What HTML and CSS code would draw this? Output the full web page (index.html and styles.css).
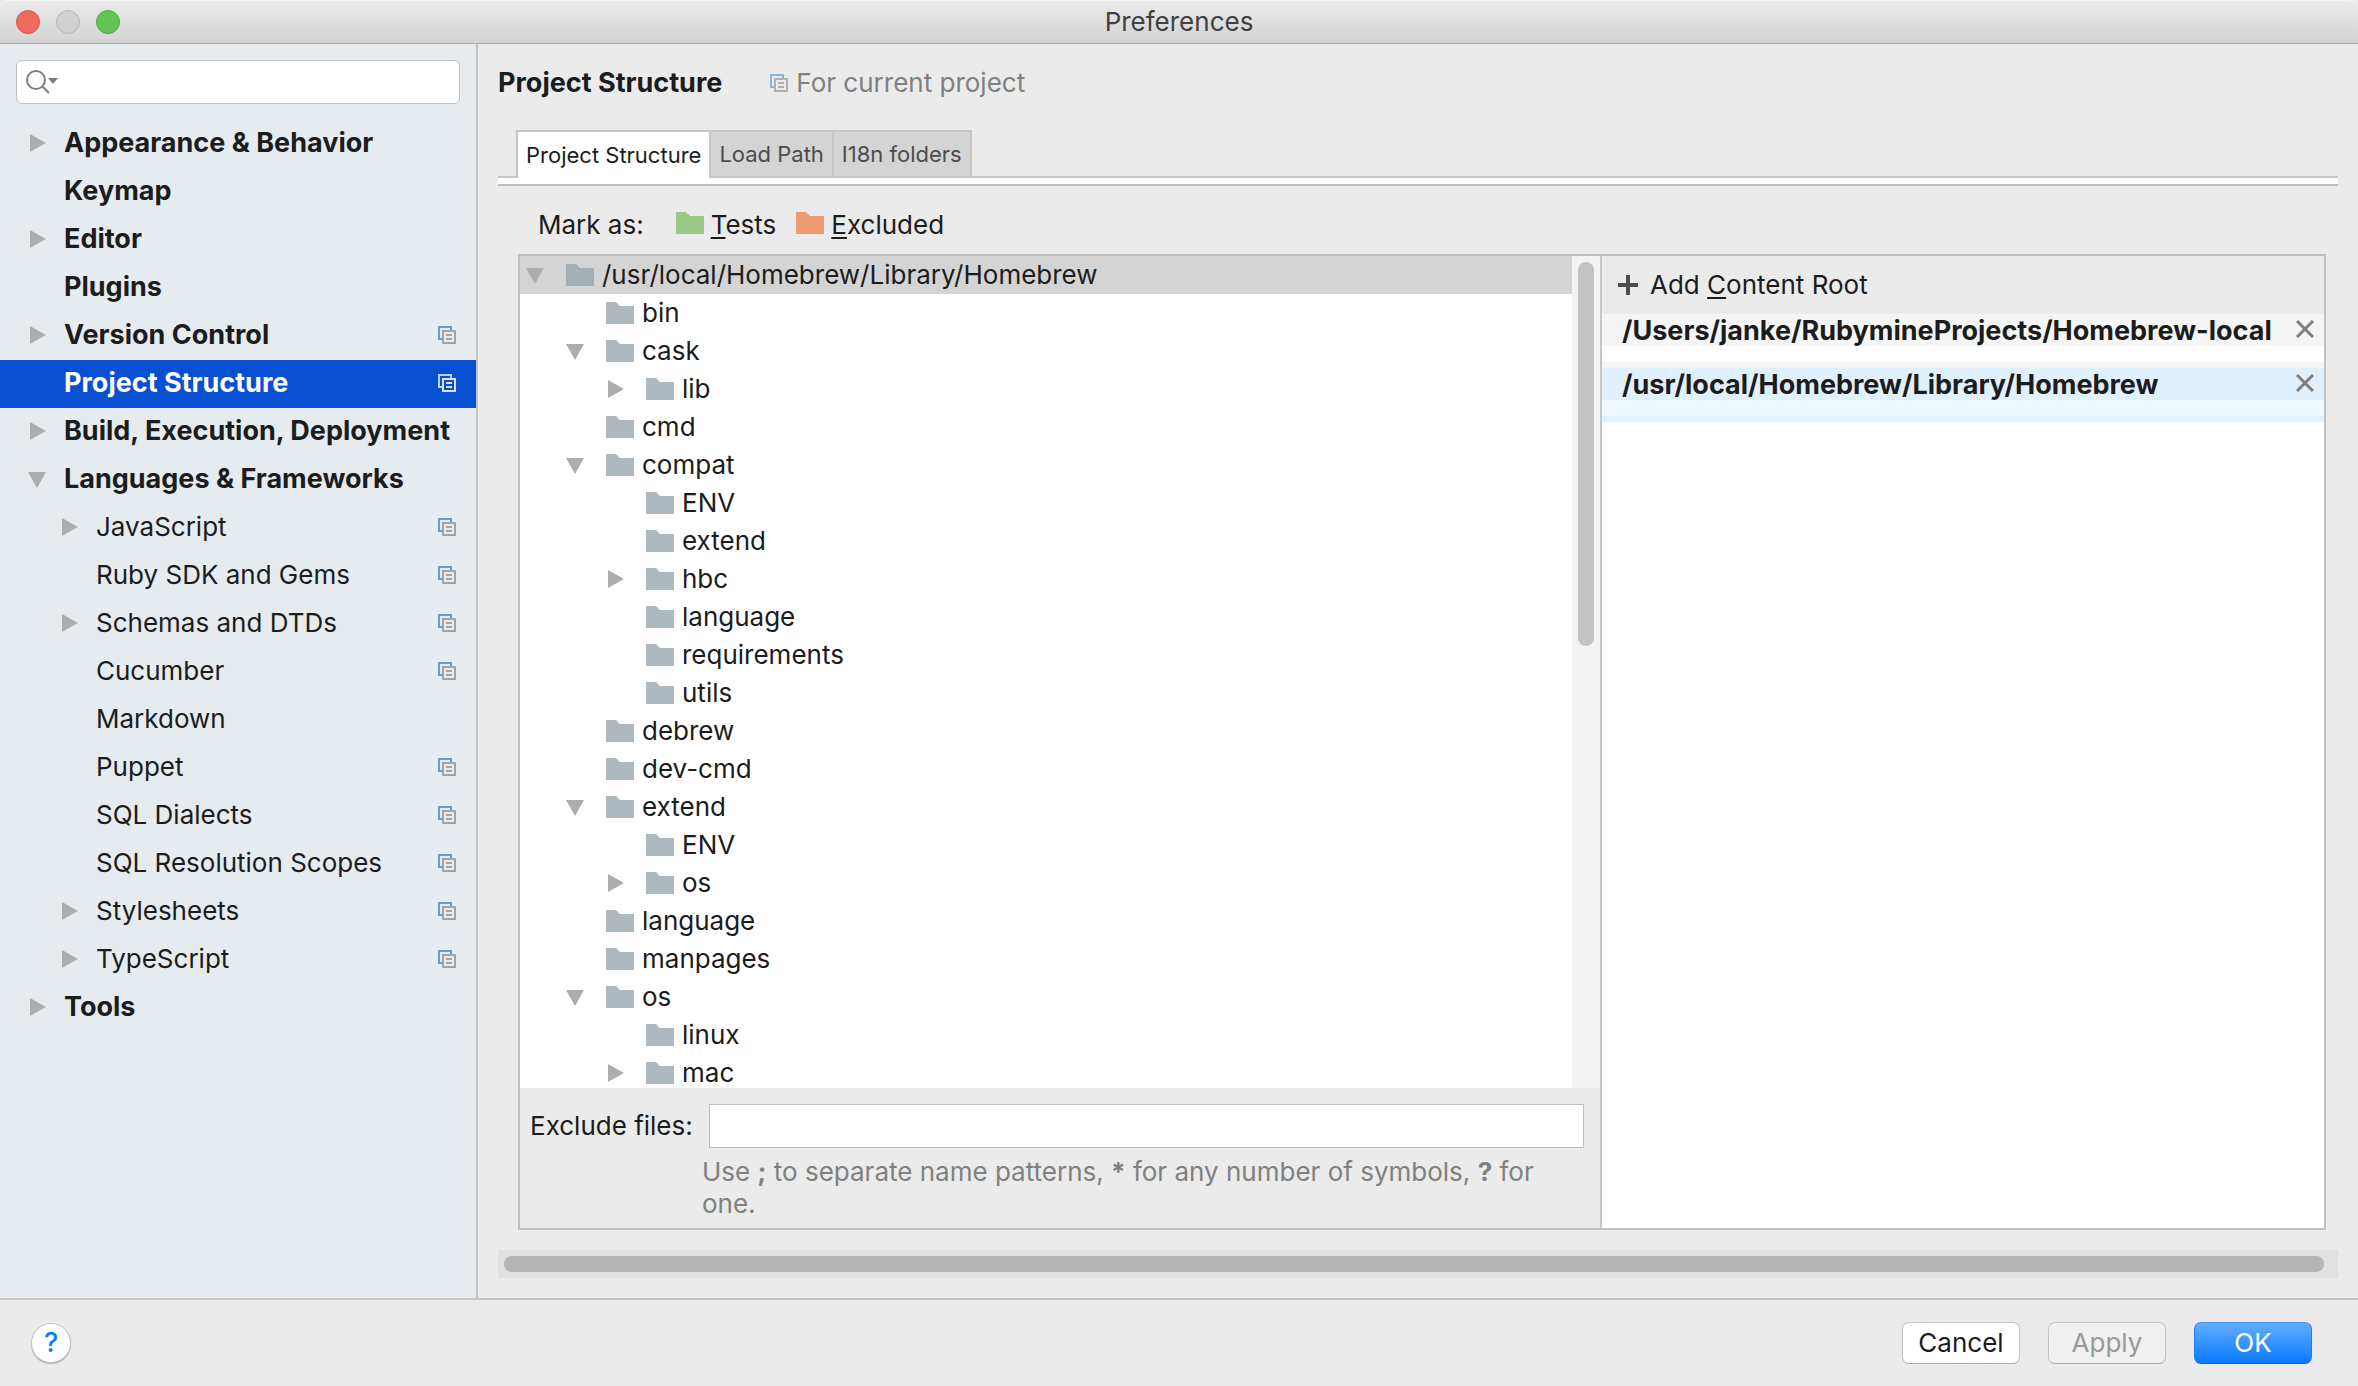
FILE: index.html
```html
<!DOCTYPE html>
<html lang="en">
<head>
  <meta charset="UTF-8" />
  <meta name="viewport" content="width=device-width, initial-scale=1.0"/>
  <title>Preferences</title>
  <link rel="stylesheet" href="styles.css">
</head>
<body>
  <!-- Shared icons -->
  <svg class="defs" aria-hidden="true">
    <symbol id="right" viewBox="0 0 18 18"><path d="M2 0L18 9L2 18Z" fill="#adadad"/></symbol>
    <symbol id="down" viewBox="0 0 18 18"><path d="M0 2H18L9 18Z" fill="#adadad"/></symbol>
    <symbol id="folder" viewBox="0 0 28 22"><path d="M0 0H10L14 4H28V22H0Z" fill="currentColor"/></symbol>
    <symbol id="copy" viewBox="0 0 18 18">
      <path class="copy-back" d="M0 0H14V4H12V2H2V12H4V14H0Z"/>
      <path class="copy-front" fill-rule="evenodd" d="M4 4H18V18H4ZM6 6V16H16V6ZM8 8H14V10H8ZM8 12H14V14H8Z"/>
    </symbol>
    <symbol id="close" viewBox="0 0 18 18"><path d="M1 1L17 17M17 1L1 17" stroke="#7f7f7f" stroke-width="3" fill="none"/></symbol>
  </svg>

  <header class="titlebar">
    <div class="lights">
      <button class="light red" aria-label="Close"></button>
      <button class="light grey" aria-label="Minimize"></button>
      <button class="light green" aria-label="Zoom"></button>
    </div>
    <h1>Preferences</h1>
  </header>

  <div class="content">
    <!-- Settings categories -->
    <nav class="sidebar">
      <div class="search">
        <svg width="34" height="26" viewBox="0 0 34 26">
          <circle cx="11" cy="11" r="9" fill="none" stroke="#7f7f7f" stroke-width="2"/>
          <path d="M17 17L24 24" stroke="#7f7f7f" stroke-width="2"/>
          <path d="M23 9H33L28 15Z" fill="#7f7f7f"/>
        </svg>
        <input type="text" aria-label="Search settings">
      </div>
      <ul class="settings">
        <li><svg class="arrow"><use href="#right"/></svg><a href="#">Appearance &amp; Behavior</a></li>
        <li><span class="arrow"></span><a href="#">Keymap</a></li>
        <li><svg class="arrow"><use href="#right"/></svg><a href="#">Editor</a></li>
        <li><span class="arrow"></span><a href="#">Plugins</a></li>
        <li><svg class="arrow"><use href="#right"/></svg><a href="#">Version Control</a><svg class="copy"><use href="#copy"/></svg></li>
        <li class="selected"><span class="arrow"></span><a href="#">Project Structure</a><svg class="copy"><use href="#copy"/></svg></li>
        <li><svg class="arrow"><use href="#right"/></svg><a href="#">Build, Execution, Deployment</a></li>
        <li><svg class="arrow"><use href="#down"/></svg><a href="#">Languages &amp; Frameworks</a></li>
        <li class="child"><svg class="arrow"><use href="#right"/></svg><a href="#">JavaScript</a><svg class="copy"><use href="#copy"/></svg></li>
        <li class="child"><span class="arrow"></span><a href="#">Ruby SDK and Gems</a><svg class="copy"><use href="#copy"/></svg></li>
        <li class="child"><svg class="arrow"><use href="#right"/></svg><a href="#">Schemas and DTDs</a><svg class="copy"><use href="#copy"/></svg></li>
        <li class="child"><span class="arrow"></span><a href="#">Cucumber</a><svg class="copy"><use href="#copy"/></svg></li>
        <li class="child"><span class="arrow"></span><a href="#">Markdown</a></li>
        <li class="child"><span class="arrow"></span><a href="#">Puppet</a><svg class="copy"><use href="#copy"/></svg></li>
        <li class="child"><span class="arrow"></span><a href="#">SQL Dialects</a><svg class="copy"><use href="#copy"/></svg></li>
        <li class="child"><span class="arrow"></span><a href="#">SQL Resolution Scopes</a><svg class="copy"><use href="#copy"/></svg></li>
        <li class="child"><svg class="arrow"><use href="#right"/></svg><a href="#">Stylesheets</a><svg class="copy"><use href="#copy"/></svg></li>
        <li class="child"><svg class="arrow"><use href="#right"/></svg><a href="#">TypeScript</a><svg class="copy"><use href="#copy"/></svg></li>
        <li><svg class="arrow"><use href="#right"/></svg><a href="#">Tools</a></li>
      </ul>
    </nav>

    <main class="main">
      <div class="heading">
        <h2>Project Structure</h2>
        <span class="scope"><svg class="copy"><use href="#copy"/></svg>For current project</span>
      </div>

      <div class="tabs">
        <button class="tab active">Project Structure</button>
        <button class="tab">Load Path</button>
        <button class="tab">I18n folders</button>
      </div>
      <div class="tab-line"></div>

      <div class="mark">
        <span>Mark as:</span>
        <button><svg class="folder tests"><use href="#folder"/></svg><span><u>T</u>ests</span></button>
        <button><svg class="folder excluded"><use href="#folder"/></svg><span><u>E</u>xcluded</span></button>
      </div>

      <div class="panel">
        <div class="left">
          <!-- Directory tree -->
          <div class="tree-wrap">
            <ul class="tree">
              <li class="root"><svg class="arrow"><use href="#down"/></svg><svg class="folder"><use href="#folder"/></svg>/usr/local/Homebrew/Library/Homebrew</li>
              <li class="l1"><span class="arrow"></span><svg class="folder"><use href="#folder"/></svg>bin</li>
              <li class="l1"><svg class="arrow"><use href="#down"/></svg><svg class="folder"><use href="#folder"/></svg>cask</li>
              <li class="l2"><svg class="arrow"><use href="#right"/></svg><svg class="folder"><use href="#folder"/></svg>lib</li>
              <li class="l1"><span class="arrow"></span><svg class="folder"><use href="#folder"/></svg>cmd</li>
              <li class="l1"><svg class="arrow"><use href="#down"/></svg><svg class="folder"><use href="#folder"/></svg>compat</li>
              <li class="l2"><span class="arrow"></span><svg class="folder"><use href="#folder"/></svg>ENV</li>
              <li class="l2"><span class="arrow"></span><svg class="folder"><use href="#folder"/></svg>extend</li>
              <li class="l2"><svg class="arrow"><use href="#right"/></svg><svg class="folder"><use href="#folder"/></svg>hbc</li>
              <li class="l2"><span class="arrow"></span><svg class="folder"><use href="#folder"/></svg>language</li>
              <li class="l2"><span class="arrow"></span><svg class="folder"><use href="#folder"/></svg>requirements</li>
              <li class="l2"><span class="arrow"></span><svg class="folder"><use href="#folder"/></svg>utils</li>
              <li class="l1"><span class="arrow"></span><svg class="folder"><use href="#folder"/></svg>debrew</li>
              <li class="l1"><span class="arrow"></span><svg class="folder"><use href="#folder"/></svg>dev-cmd</li>
              <li class="l1"><svg class="arrow"><use href="#down"/></svg><svg class="folder"><use href="#folder"/></svg>extend</li>
              <li class="l2"><span class="arrow"></span><svg class="folder"><use href="#folder"/></svg>ENV</li>
              <li class="l2"><svg class="arrow"><use href="#right"/></svg><svg class="folder"><use href="#folder"/></svg>os</li>
              <li class="l1"><span class="arrow"></span><svg class="folder"><use href="#folder"/></svg>language</li>
              <li class="l1"><span class="arrow"></span><svg class="folder"><use href="#folder"/></svg>manpages</li>
              <li class="l1"><svg class="arrow"><use href="#down"/></svg><svg class="folder"><use href="#folder"/></svg>os</li>
              <li class="l2"><span class="arrow"></span><svg class="folder"><use href="#folder"/></svg>linux</li>
              <li class="l2"><svg class="arrow"><use href="#right"/></svg><svg class="folder"><use href="#folder"/></svg>mac</li>
            </ul>
            <div class="v-scroll"><div class="v-thumb"></div></div>
          </div>

          <div class="exclude">
            <label for="exclude">Exclude files:</label>
            <input type="text" id="exclude">
          </div>
          <p class="hint">Use <b>;</b> to separate name patterns, <b>*</b> for any number of symbols, <b>?</b> for one.</p>
        </div>

        <!-- Content roots -->
        <div class="roots">
          <div class="add-root">
            <button>
              <svg width="20" height="20" viewBox="0 0 20 20"><path d="M10 0V20M0 10H20" stroke="#4d4d4d" stroke-width="4"/></svg>
              <span>Add <u>C</u>ontent Root</span>
            </button>
          </div>
          <div class="content-root">
            <div class="root-name"><span>/Users/janke/RubymineProjects/Homebrew-local</span><button aria-label="Remove"><svg><use href="#close"/></svg></button></div>
          </div>
          <div class="content-root current">
            <div class="root-name"><span>/usr/local/Homebrew/Library/Homebrew</span><button aria-label="Remove"><svg><use href="#close"/></svg></button></div>
          </div>
        </div>
      </div>

      <div class="h-scroll"><div class="h-thumb"></div></div>
    </main>
  </div>

  <footer class="footer">
    <button class="help" aria-label="Help">?</button>
    <div class="actions">
      <button class="btn">Cancel</button>
      <button class="btn" disabled>Apply</button>
      <button class="btn primary">OK</button>
    </div>
  </footer>
</body>
</html>
```

FILE: styles.css
```css
* { box-sizing: border-box; margin: 0; padding: 0; }

body {
  display: flex;
  flex-direction: column;
  height: 100vh;
  background: #ebebeb;
  color: #1c1c1c;
  font-family: Inter, "Liberation Sans", sans-serif;
  font-size: 26px;
  line-height: 32px;
  overflow: hidden;
}

button, input { font: inherit; color: inherit; }
button { background: none; border: none; white-space: nowrap; }
ul { list-style: none; }
a { color: inherit; text-decoration: none; }
u { text-decoration-thickness: 2px; text-underline-offset: 3px; text-decoration-skip-ink: none; }
svg { flex: none; }

.defs { position: absolute; width: 0; height: 0; }
.arrow { width: 18px; height: 18px; flex: none; }
.folder { width: 28px; height: 22px; color: #adb8bf; }
.copy { --back: #5f9fc4; --front: #a3a3a3; width: 18px; height: 18px; }
.copy-back { fill: var(--back); }
.copy-front { fill: var(--front); }

/* Title bar */
.titlebar {
  display: flex;
  align-items: center;
  flex: none;
  height: 44px;
  padding: 0 16px;
  background: linear-gradient(#ebebeb, #d2d2d2);
  border-top: 1px solid #f6f6f6;
  border-bottom: 1px solid #adadad;
  border-radius: 10px 10px 0 0;
}

.lights { display: flex; flex: 1; gap: 16px; }
.titlebar::after { content: ""; flex: 1; }
.light { width: 24px; height: 24px; border: 1px solid; border-radius: 50%; }
.red { background: #ee6a5f; border-color: #d95248; }
.grey { background: #d1d1d1; border-color: #b5b5b5; }
.green { background: #62c655; border-color: #4ea73f; }

h1 { font-size: 26px; font-weight: 400; color: #404040; }

.content { display: flex; flex: 1; min-height: 0; }

/* Sidebar */
.sidebar {
  flex: none;
  width: 478px;
  background: #e5ebef;
  border-right: 2px solid #c4c4c4;
}

.search {
  display: flex;
  align-items: center;
  height: 44px;
  margin: 16px;
  padding: 0 8px;
  background: #fff;
  border: 1px solid #bfbfbf;
  border-radius: 6px;
}

.search input { flex: 1; min-width: 0; border: none; outline: none; background: none; }

.settings li {
  display: flex;
  align-items: center;
  gap: 18px;
  height: 48px;
  padding: 0 20px 2px 28px;
  font-size: 27px;
  font-weight: 700;
}

.settings li a { flex: 1; white-space: nowrap; }
.settings .child { padding-left: 60px; font-size: 26px; font-weight: 400; }
.settings .selected { background: #0850d0; color: #fff; }
.selected .copy { --back: #b8d3ee; --front: #dedede; }

/* Main area */
.main {
  display: flex;
  flex-direction: column;
  flex: 1;
  min-width: 0;
  padding: 0 20px;
}

.heading { display: flex; align-items: center; gap: 48px; height: 78px; }
h2 { font-size: 27px; font-weight: 700; }
.scope { display: flex; align-items: center; gap: 8px; color: #808080; }
.scope .copy { --back: #84b9dc; --front: #b0b0b0; }

.tabs { display: flex; margin: 8px 18px 0; }
.tab {
  height: 46px;
  padding: 0 8px;
  font-size: 22px;
  background: #d4d4d4;
  color: #4c4c4c;
  border: 2px solid #c6c6c6;
  border-bottom: none;
  border-left-width: 0;
}
.tab.active {
  height: 48px;
  margin-bottom: -2px;
  border-left-width: 2px;
  background: #fff;
  color: #1c1c1c;
  z-index: 1;
}
.tab-line {
  flex: none;
  height: 10px;
  background: #fff;
  border-top: 2px solid #c6c6c6;
  border-bottom: 2px solid #c0c0c0;
}

.mark { display: flex; align-items: center; height: 68px; padding: 10px 40px 0; gap: 20px; }
.mark > span { margin-right: 12px; }
.mark button { display: flex; align-items: center; gap: 7px; }
.mark .folder { margin-bottom: 4px; }
.mark .tests { color: #99ca85; }
.mark .excluded { color: #ee9b72; }

.panel {
  display: flex;
  flex: 1;
  min-height: 0;
  margin: 0 12px 20px 20px;
  border: 2px solid #c0c0c0;
}

.left { display: flex; flex-direction: column; flex: 1; min-width: 0; }
.tree-wrap { display: flex; flex: 1; min-height: 0; background: #fff; }
.tree { flex: 1; overflow: hidden; }
.tree li { display: flex; align-items: center; height: 38px; padding-left: 6px; white-space: nowrap; }
.tree .arrow { margin-right: 22px; }
.tree .folder { margin-right: 8px; }
.tree .root { background: #d4d4d4; }
.tree .root .folder { color: #a4afb6; }
.tree .l1 { padding-left: 46px; }
.tree .l2 { padding-left: 86px; }

.v-scroll { width: 28px; padding: 6px 6px 0; background: #f3f3f3; }
.v-thumb { height: 384px; background: #c3c3c3; border-radius: 8px; }

.exclude { display: flex; align-items: center; gap: 16px; padding: 16px 16px 0 10px; }
.exclude input { flex: 1; min-width: 0; height: 44px; padding: 0 8px; background: #fff; border: 1px solid #bfbfbf; }
.hint { padding: 8px 40px 8px 182px; color: #808080; }

.roots { flex: none; width: 724px; background: #fff; border-left: 2px solid #c6c6c6; }
.add-root { height: 58px; padding: 13px 16px; background: #ebebeb; }
.add-root button { display: flex; align-items: center; gap: 12px; }
.content-root { height: 54px; background: #fff; border-bottom: 6px solid #f5f5f5; }
.root-name {
  display: flex;
  justify-content: space-between;
  height: 32px;
  padding: 0 10px 0 20px;
  background: #f5f5f5;
  font-size: 27px;
  font-weight: 700;
  line-height: 34px;
  white-space: nowrap;
}
.root-name button, .root-name svg { display: block; width: 18px; height: 18px; }
.root-name button { margin-top: 6px; }
.current { background: #eff7ff; border-color: #dff1ff; }
.current .root-name { background: #dff1ff; }

.h-scroll { flex: none; height: 28px; margin-bottom: 20px; padding: 6px 14px 6px 6px; background: #e1e1e1; }
.h-thumb { height: 16px; background: #b4b4b4; border-radius: 8px; }

/* Bottom bar */
.footer {
  display: flex;
  align-items: center;
  justify-content: space-between;
  flex: none;
  height: 88px;
  padding: 0 46px 0 31px;
  border-top: 2px solid #c4c4c4;
}

.help {
  width: 40px;
  height: 40px;
  background: #fff;
  border: 1px solid #c4c4c4;
  border-radius: 50%;
  box-shadow: 0 1px 1px #b0b0b0;
  color: #0a7aff;
  font-size: 27px;
  font-weight: 500;
}

.actions { display: flex; gap: 28px; }
.btn {
  width: 118px;
  height: 42px;
  background: #fff;
  border: 1px solid #c4c4c4;
  border-bottom-color: #adadad;
  border-radius: 7px;
}
.btn:disabled { background: #f1f1f1; color: #999; }
.btn.primary { background: linear-gradient(#62aeff, #0a7aff); border-color: #3d97f7 #1a7ffa #0a60ff; color: #fff; }
```
